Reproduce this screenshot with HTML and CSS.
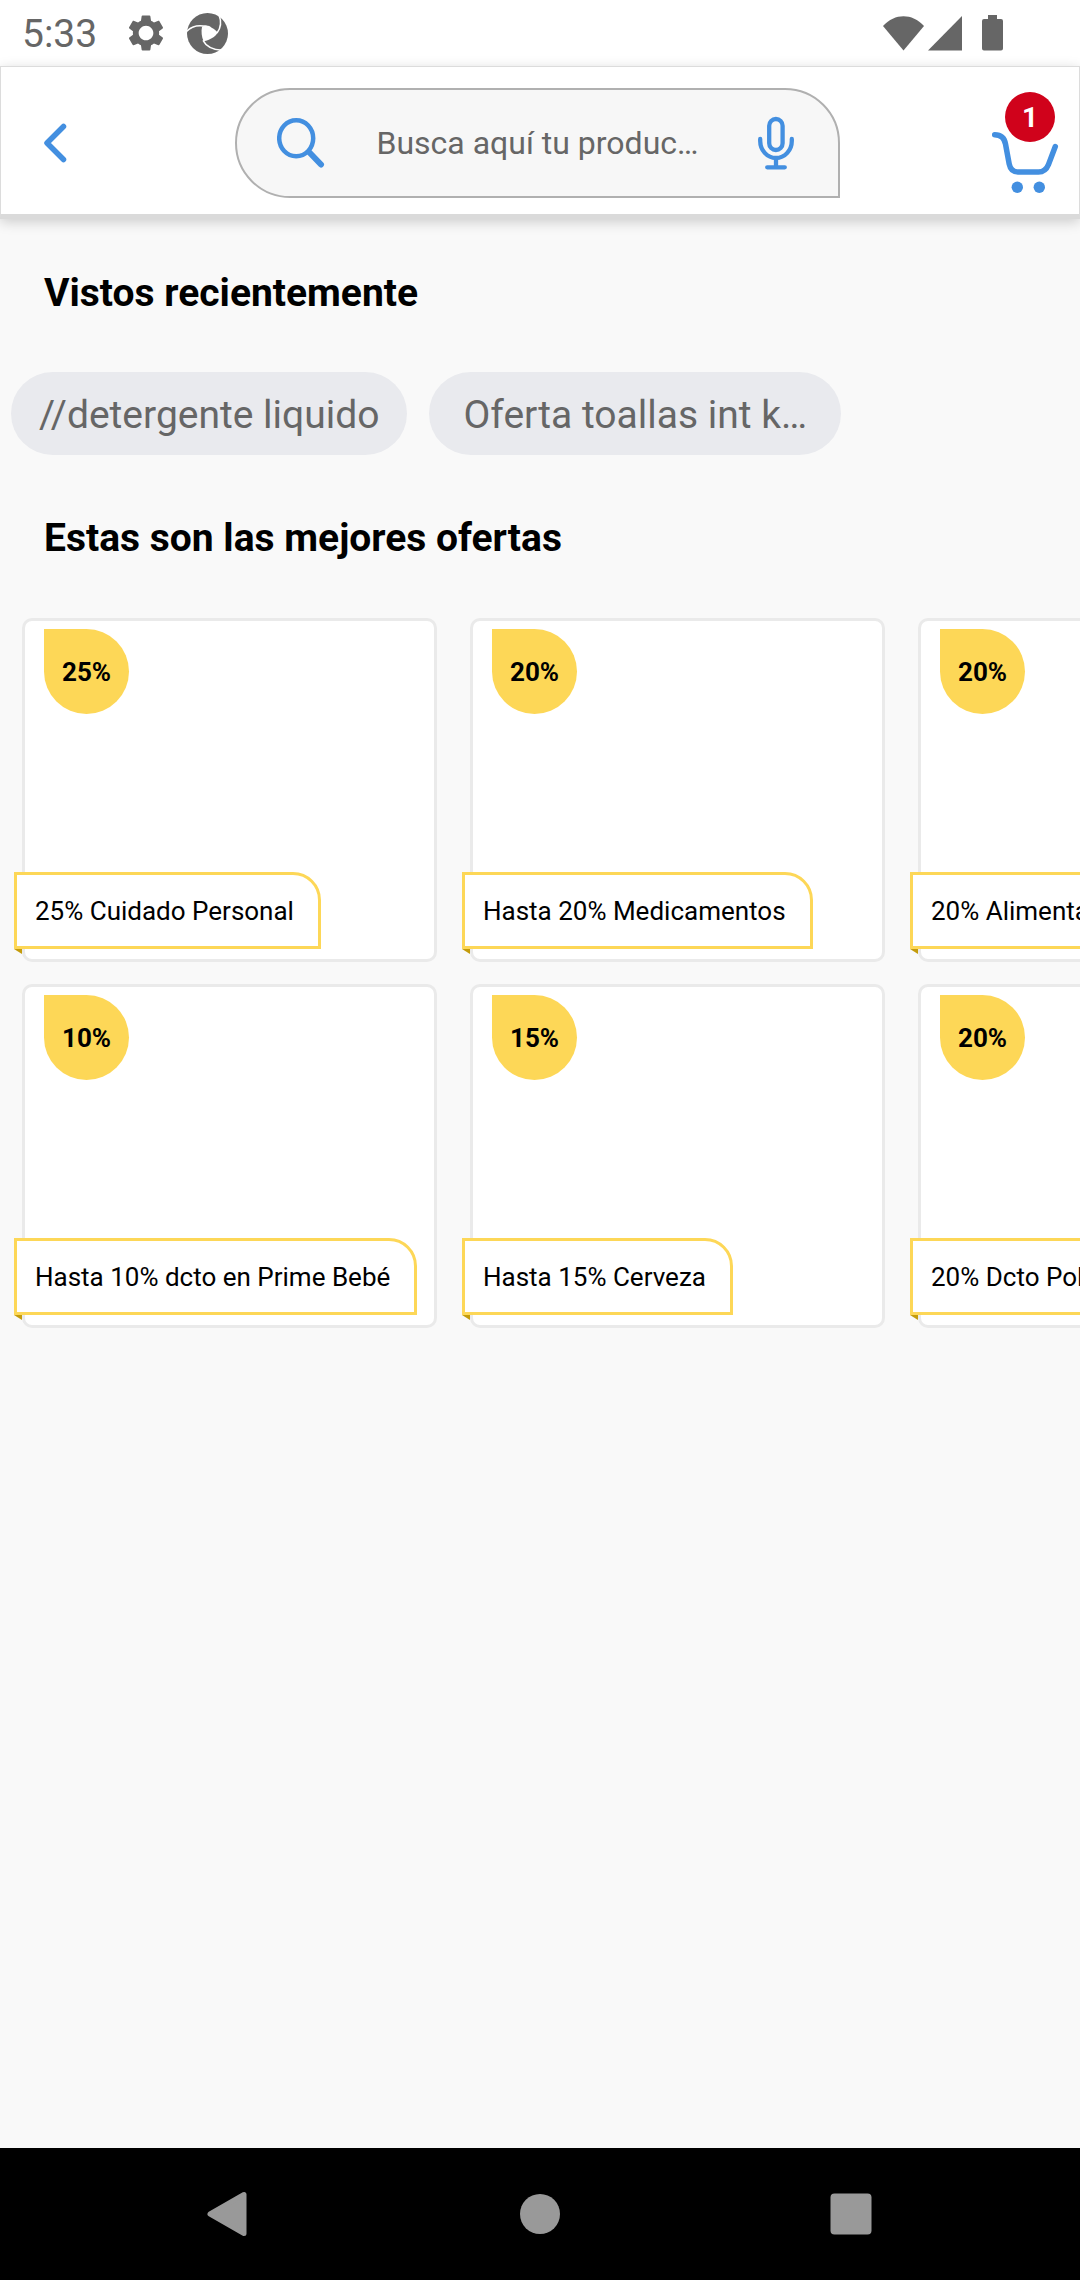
FILE: index.html
```html
<!DOCTYPE html>
<html lang="es">
<head>
<meta charset="utf-8">
<meta name="viewport" content="width=device-width, initial-scale=1">
<title>Ofertas</title>
<link rel="stylesheet" href="styles.css">
</head>
<body>
<div class="status">
  <span class="clock">5:33</span>
  <svg class="gear" viewBox="0 0 24 24" width="42" height="42" fill="currentColor"><path d="M19.43 12.98c.04-.32.07-.64.07-.98s-.03-.66-.07-.98l2.11-1.65c.19-.15.24-.42.12-.64l-2-3.46c-.12-.22-.39-.3-.61-.22l-2.49 1c-.52-.4-1.08-.73-1.69-.98l-.38-2.65C14.46 2.18 14.25 2 14 2h-4c-.25 0-.46.18-.49.42l-.38 2.65c-.61.25-1.17.59-1.69.98l-2.49-1c-.23-.09-.49 0-.61.22l-2 3.46c-.13.22-.07.49.12.64l2.11 1.65c-.04.32-.07.65-.07.98s.03.66.07.98l-2.11 1.65c-.19.15-.24.42-.12.64l2 3.46c.12.22.39.3.61.22l2.49-1c.52.4 1.08.73 1.69.98l.38 2.65c.03.24.24.42.49.42h4c.25 0 .46-.18.49-.42l.38-2.65c.61-.25 1.17-.59 1.69-.98l2.49 1c.23.09.49 0 .61-.22l2-3.46c.12-.22.07-.49-.12-.64l-2.11-1.65zM12 16.200c-2.320 0-4.200-1.880-4.200-4.200s1.880-4.200 4.200-4.200 4.200 1.880 4.200 4.200-1.880 4.200-4.200 4.200z"/></svg>
  <svg class="shutter" viewBox="0 0 123 123" width="41" height="41">
    <circle cx="61.500" cy="61.500" r="61.500" fill="currentColor"/>
    <path d="M45 41C56 35 66 36 74 44C82 48 88 53 92 59C84 72 70 80 50 85C44 72 42 56 45 41Z" fill="#fff"/>
    <g fill="none" stroke="#fff" stroke-width="4.500">
      <path d="M-2 56C12 40 30 34 58 40"/>
      <path d="M96 6C104 26 102 44 90 60"/>
      <path d="M48 82C56 98 74 110 106 112"/>
    </g>
  </svg>
  <span class="grow"></span>
  <svg class="wifi" viewBox="0 0 41 35" width="41" height="35" fill="currentColor"><path d="M0 10C12-3 29-3 41 10L20.500 34.500Z"/></svg>
  <svg class="signal" viewBox="0 0 34 35" width="34" height="35" fill="currentColor"><path d="M34 0V34.500H0Z"/></svg>
  <svg class="battery" viewBox="0 0 21 36" width="21" height="36" fill="currentColor"><path d="M6 0h9v4h4a2 2 0 0 1 2 2v27.500a2 2 0 0 1-2 2H2a2 2 0 0 1-2-2V6a2 2 0 0 1 2-2h4z"/></svg>
</div>

<header class="topbar">
  <button class="back" type="button" aria-label="Volver">
    <svg viewBox="0 0 24 40" width="24" height="40" class="line"><path d="M20.500 3.500L4 20L20.500 36.500" stroke-width="5.500"/></svg>
  </button>
  <form class="search" role="search">
    <svg viewBox="0 0 48 50" width="48" height="50" class="line"><ellipse cx="19.200" cy="20.300" rx="17" ry="18" stroke-width="4.500"/><path d="M32.500 34.500L44 46.500" stroke-width="6"/></svg>
    <input type="text" class="search-input" aria-label="Buscar" placeholder="Busca aquí tu produc…">
    <button class="mic" type="button" aria-label="Buscar por voz">
      <svg viewBox="0 0 36 54" width="36" height="54" class="line" stroke-width="4.300"><rect x="11.200" y="3" width="13.400" height="31" rx="6.700"/><path d="M2.200 23V25C2.200 34 9 42 18 42S33.800 34 33.800 25V23M18 42V51M9.200 51.300H26.800"/></svg>
    </button>
  </form>
  <button class="cart" type="button" aria-label="Carrito, 1 producto">
    <svg viewBox="0 0 70 64" width="70" height="64" class="line"><path d="M4.700 4.700C11 4.800 14.500 8 15.500 14L19.200 34C20.300 39.500 23 42 28 42H48.500C53.500 42 56.500 39.500 58.500 34.500L65.300 16.500" stroke-width="5.500"/><g fill="#438fe0" stroke="none"><circle cx="27.300" cy="57.300" r="5.700"/><circle cx="49.300" cy="57.300" r="5.700"/></g></svg>
    <span class="count">1</span>
  </button>
</header>

<main class="content">
  <h2 class="title">Vistos recientemente</h2>
  <div class="chips">
    <button class="chip" type="button">//detergente liquido</button>
    <button class="chip chip-wide" type="button">Oferta toallas int k…</button>
  </div>
  <h2 class="title">Estas son las mejores ofertas</h2>
  <div class="offers">
    <a class="card" href="#"><span class="badge">25%</span><span class="label">25% Cuidado Personal</span></a>
    <a class="card" href="#"><span class="badge">20%</span><span class="label">Hasta 20% Medicamentos</span></a>
    <a class="card" href="#"><span class="badge">20%</span><span class="label">20% Alimentación</span></a>
    <a class="card" href="#"><span class="badge">10%</span><span class="label">Hasta 10% dcto en Prime Bebé</span></a>
    <a class="card" href="#"><span class="badge">15%</span><span class="label">Hasta 15% Cerveza</span></a>
    <a class="card" href="#"><span class="badge">20%</span><span class="label">20% Dcto Pollo</span></a>
  </div>
</main>

<nav class="navbar">
  <button type="button" aria-label="Atrás"><svg viewBox="0 0 46 46" width="46" height="46"><path d="M39 3.500V42.500L5 23Z" fill="#999" stroke="#999" stroke-width="5" stroke-linejoin="round"/></svg></button>
  <button type="button" aria-label="Inicio"><svg viewBox="0 0 46 46" width="46" height="46"><circle cx="23" cy="23" r="20" fill="#999"/></svg></button>
  <button type="button" aria-label="Recientes"><svg viewBox="0 0 46 46" width="46" height="46"><rect x="1.500" y="2.500" width="41" height="41" rx="4" fill="#999"/></svg></button>
</nav>
</body>
</html>
```
FILE: styles.css
```css
* { box-sizing: border-box; }

body {
  margin: 0;
  min-height: 100vh;
  display: flex;
  flex-direction: column;
  background: #f9f9f9;
  color: #000;
  font-family: Roboto, "Liberation Sans", sans-serif;
}

button {
  margin: 0;
  padding: 0;
  border: 0;
  background: none;
  color: inherit;
  font: inherit;
}

svg { display: block; flex: none; }

.line {
  fill: none;
  stroke: #438fe0;
  stroke-linecap: round;
  stroke-linejoin: round;
}

.status {
  display: flex;
  align-items: center;
  height: 66px;
  padding: 0 77px 0 22px;
  background: #fff;
  color: #666;
}
.clock { font-size: 39px; line-height: 44px; padding-top: 2px; }
.gear { margin-left: 28px; }
.shutter { margin-left: 20px; }
.grow { flex: 1; }
.signal { margin-left: 4px; }
.battery { margin-left: 20px; }

.topbar {
  display: grid;
  grid-template-columns: 1fr minmax(0, 605px) 1fr;
  align-items: center;
  height: 153px;
  padding: 5px 6px 0 0;
  border: 1px solid #dcdcdc;
  border-bottom: 5px solid #dadada;
  background: #fff;
  box-shadow: 0 3px 12px rgba(0, 0, 0, 0.18);
}
.back { justify-self: start; padding-left: 42px; }

.search {
  display: flex;
  align-items: center;
  height: 110px;
  padding: 0 44px 0 40px;
  border: 2px solid #b0b0b0;
  border-radius: 55px 55px 0 55px;
  background: #f7f7f7;
}
.search-input {
  flex: 1;
  min-width: 0;
  margin: 0 16px 0 52px;
  padding: 0;
  border: 0;
  outline: 0;
  background: none;
  color: #666;
  font: 32px/40px Roboto, "Liberation Sans", sans-serif;
}
.search-input::placeholder { color: #666; opacity: 1; }

.cart {
  position: relative;
  justify-self: end;
  margin-right: 13px;
  padding-top: 38px;
}
.count {
  position: absolute;
  top: 0;
  right: 5px;
  width: 50px;
  border-radius: 25px;
  background: #d0021b;
  color: #fff;
  font-size: 28px;
  font-weight: 700;
  line-height: 52px;
  height: 50px;
}

.content {
  flex: 1;
  padding-top: 52px;
  overflow: hidden;
}
.title {
  margin: 0 44px;
  font-size: 39px;
  font-weight: 700;
  line-height: 44px;
}

.chips {
  display: flex;
  gap: 22px;
  margin: 57px 11px 61px;
}
.chip {
  height: 83px;
  padding: 2px 28px 0;
  border-radius: 42px;
  background: #e9eaee;
  color: #666;
  font-size: 39px;
  line-height: 44px;
  white-space: nowrap;
}
.chip-wide { padding: 2px 34px 0; }

.offers {
  display: grid;
  grid-template-columns: repeat(3, 415px);
  gap: 22px 33px;
  padding: 58px 22px 0;
  overflow-x: auto;
  scrollbar-width: none;
}
.card {
  display: flex;
  flex-direction: column;
  align-items: flex-start;
  justify-content: space-between;
  height: 344px;
  padding: 8px 0 10px;
  border: 3px solid #eaeaea;
  border-radius: 10px;
  background: #fff;
  color: #000;
  font-size: 26px;
  text-decoration: none;
}
.badge {
  width: 85px;
  height: 85px;
  margin-left: 19px;
  border-radius: 0 50% 50% 50%;
  background: #fdd757;
  font-weight: 700;
  line-height: 87px;
  text-align: center;
}
.label {
  position: relative;
  height: 77px;
  margin-left: -11px;
  padding: 0 24px 0 18px;
  border: 3px solid #fdd757;
  border-top-right-radius: 28px;
  background: #fff;
  line-height: 73px;
  white-space: nowrap;
}
/* folded corner under the ribbon */
.label::after {
  content: "";
  position: absolute;
  top: 100%;
  left: -3px;
  width: 8px;
  height: 5px;
  margin-top: 3px;
  background: #c49c0c;
  clip-path: polygon(0 0, 100% 0, 100% 100%);
}

.navbar {
  display: flex;
  align-items: center;
  justify-content: space-between;
  height: 132px;
  padding: 0 19%;
  background: #000;
}
```
